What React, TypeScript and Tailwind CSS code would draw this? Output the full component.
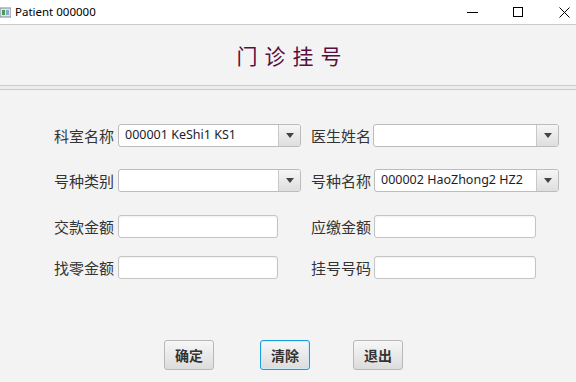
import React from 'react';

const cjk = { fontFamily: '"Noto Sans CJK SC", "Noto Sans", sans-serif' };
const latin = { fontFamily: '"Noto Sans", "Noto Sans CJK SC", sans-serif' };

const Combo = ({ value, w }: { value?: string; w: string }) => (
  <div className={`${w} h-[23px] flex bg-white border border-[#bcbcbc] rounded-[3px] overflow-hidden`}>
    <div className="flex-1 flex items-center pl-[6px] text-[12.5px] text-[#1c1c2c]" style={latin}>
      {value}
    </div>
    <div className="w-[22px] flex items-center justify-center border-l border-[#c8c8c8] bg-gradient-to-b from-[#f6f6f6] to-[#dedede]">
      <svg width="8" height="5" viewBox="0 0 8 5">
        <path d="M0 0h8L4 5z" fill="#444" />
      </svg>
    </div>
  </div>
);

const Field = ({ w }: { w: string }) => (
  <div className={`${w} h-[23px] bg-white border border-[#c4c4c4] rounded-[3px] shadow-[inset_0_1px_2px_rgba(0,0,0,0.06)]`} />
);

const Label = ({ children }: { children: React.ReactNode }) => (
  <span className="w-[60px] text-[15px] leading-none text-[#333] whitespace-nowrap" style={cjk}>
    {children}
  </span>
);

const Btn = ({ children, focus }: { children: React.ReactNode; focus?: boolean }) => (
  <button
    className={`w-[50px] h-[30px] rounded-[3px] text-[14px] font-bold text-[#333] bg-gradient-to-b from-[#f7f7f7] to-[#dcdcdc] border ${
      focus ? 'border-[#1a9fdc] shadow-[inset_0_0_0_1px_#cdeafa]' : 'border-[#b8b8b8]'
    }`}
    style={cjk}
  >
    {children}
  </button>
);

export default function App() {
  return (
    <div className="w-[576px] h-[382px] overflow-hidden bg-[#f3f3f3] flex flex-col">
      {/* window title bar */}
      <div className="h-[25px] bg-white border-b border-[#cccccc] flex items-center relative">
        <svg width="11" height="11" viewBox="0 0 11 11">
          <rect x="0" y="1" width="11" height="9" fill="#dfe6ec" stroke="#7a8a99" strokeWidth="1" />
          <rect x="2" y="3" width="3" height="5" fill="#4a9a5a" />
          <rect x="6" y="3" width="3" height="5" fill="#8aa9c8" />
        </svg>
        <span className="ml-[4px] text-[11.5px] text-black" style={latin}>Patient 000000</span>
        <div className="ml-auto flex items-center h-full">
          <div className="w-[46px] h-full flex items-center justify-center">
            <div className="w-[11px] h-px bg-black" />
          </div>
          <div className="w-[46px] h-full flex items-center justify-center">
            <div className="w-[10px] h-[10px] border border-black" />
          </div>
          <div className="w-[11px]" />
          <div className="w-[24px] h-full flex items-center justify-center">
            <svg width="11" height="11" viewBox="0 0 11 11">
              <path d="M0.5 0.5l10 10M10.5 0.5l-10 10" stroke="#000" strokeWidth="1" />
            </svg>
          </div>
        </div>
      </div>

      {/* heading */}
      <div className="h-[60px] flex items-center justify-center">
        <h1 className="text-[21px] tracking-[7px] pl-[9px] text-[#5a0d3f] pt-[1px]" style={cjk}>
          门诊挂号
        </h1>
      </div>
      <div className="h-[5px] border-t border-b border-[#cacaca] bg-[#ececec]" />

      {/* form */}
      <div className="flex flex-col pl-[54px] pt-[34px]">
        <div className="flex items-center h-[23px]">
          <div className="w-[257px] flex items-center gap-[4px]">
            <Label>科室名称</Label>
            <Combo w="w-[183px]" value="000001 KeShi1 KS1" />
          </div>
          <div className="flex items-center gap-[2px]">
            <Label>医生姓名</Label>
            <Combo w="w-[186px]" />
          </div>
        </div>
        <div className="flex items-center h-[23px] mt-[22px]">
          <div className="w-[257px] flex items-center gap-[4px]">
            <Label>号种类别</Label>
            <Combo w="w-[183px]" />
          </div>
          <div className="flex items-center gap-[3px]">
            <Label>号种名称</Label>
            <Combo w="w-[185px]" value="000002 HaoZhong2 HZ2" />
          </div>
        </div>
        <div className="flex items-center h-[23px] mt-[23px]">
          <div className="w-[257px] flex items-center gap-[4px]">
            <Label>交款金额</Label>
            <Field w="w-[160px]" />
          </div>
          <div className="flex items-center gap-[3px]">
            <Label>应缴金额</Label>
            <Field w="w-[162px]" />
          </div>
        </div>
        <div className="flex items-center h-[23px] mt-[18px]">
          <div className="w-[257px] flex items-center gap-[4px]">
            <Label>找零金额</Label>
            <Field w="w-[160px]" />
          </div>
          <div className="flex items-center gap-[3px]">
            <Label>挂号号码</Label>
            <Field w="w-[162px]" />
          </div>
        </div>
      </div>

      {/* buttons */}
      <div className="flex pl-[164px] mt-[61px]">
        <Btn>确定</Btn>
        <div className="ml-[46px]">
          <Btn focus>清除</Btn>
        </div>
        <div className="ml-[43px]">
          <Btn>退出</Btn>
        </div>
      </div>
    </div>
  );
}
